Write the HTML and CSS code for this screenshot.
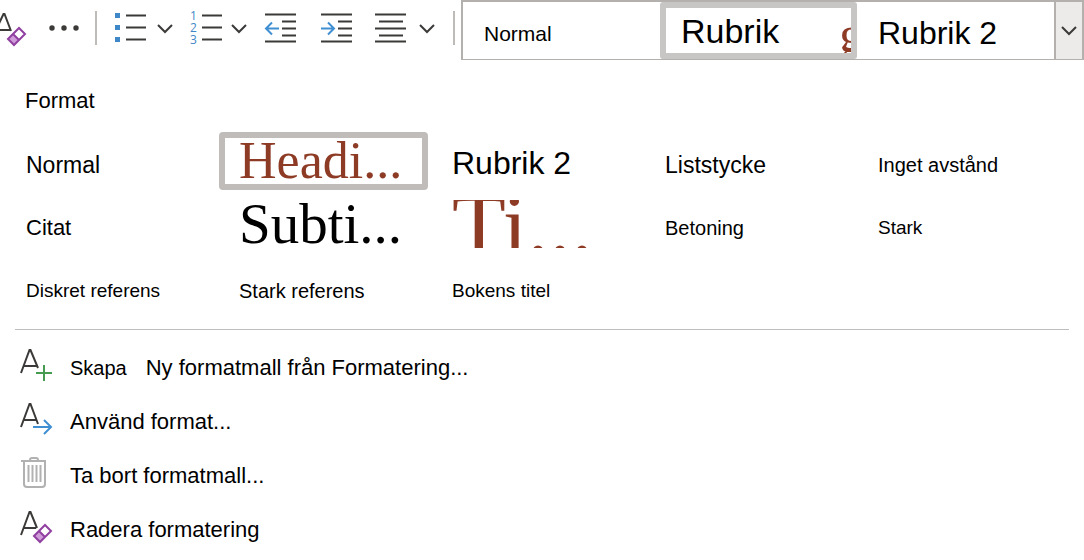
FILE: index.html
```html
<!DOCTYPE html>
<html lang="sv">
<head>
<meta charset="utf-8">
<meta name="viewport" content="width=device-width, initial-scale=1">
<title>Format</title>
<link rel="stylesheet" href="styles.css">
</head>
<body>
<header class="ribbon">
  <div class="tools">
    <button class="tool" aria-label="Radera formatering"><svg width="28" height="36" viewBox="0 0 28 36"><path class="ink" d="M-5 22 3.500 4h1L11 21M-2 20h12"/><path class="eraser-fill" d="m8 29 5-5 6 6-5 5z"/><path class="eraser" d="m8 29 11-11 6 6-11 11zM13 24l6 6"/></svg></button>
    <button class="tool tool-more" aria-label="Mer"><svg width="32" height="8" viewBox="0 0 32 8"><circle cx="4" cy="4" r="2.700"/><circle cx="16" cy="4" r="2.700"/><circle cx="28" cy="4" r="2.700"/></svg></button>
    <span class="rule"></span>
    <button class="tool tool-bullets" aria-label="Punktlista"><svg width="60" height="34" viewBox="0 0 60 34"><path class="blue-fill" d="M1 2h5v5H1zM1 14h5v5H1zM1 26h5v5H1z"/><path class="ink" d="M12 4.500h20M12 16.500h20M12 28.500h20M44 14l7 7 7-7"/></svg></button>
    <button class="tool tool-numbers" aria-label="Numrerad lista"><svg width="60" height="34" viewBox="0 0 60 34"><text class="digit" x="0" y="9">1</text><text class="digit" x="0" y="21">2</text><text class="digit" x="0" y="33">3</text><path class="ink" d="M12 4.500h20M12 16.500h20M12 28.500h20M42 14l7 7 7-7"/></svg></button>
    <button class="tool tool-outdent" aria-label="Minska indrag"><svg width="32" height="30" viewBox="0 0 32 30"><path class="ink" d="M0 1.500h31M17 8.500h14M17 15.500h14M17 22.500h14M0 28.500h31"/><path class="blue" d="M14 15.500H1M7 9.500l-6 6 6 6"/></svg></button>
    <button class="tool tool-indent" aria-label="Öka indrag"><svg width="32" height="30" viewBox="0 0 32 30"><path class="ink" d="M0 1.500h31M17 8.500h14M17 15.500h14M17 22.500h14M0 28.500h31"/><path class="blue" d="M0 15.500h13M7 9.500l6 6-6 6"/></svg></button>
    <button class="tool tool-align" aria-label="Justering"><svg width="62" height="30" viewBox="0 0 62 30"><path class="ink" d="M0 1.500h31M4 8.500h24M0 15.500h31M4 22.500h24M0 28.500h31M45 12l7 7 7-7"/></svg></button>
    <span class="rule"></span>
  </div>
  <div class="gallery">
    <button class="preview preview-normal">Normal</button>
    <button class="preview preview-selected"><span>Rubrik</span><span class="preview-tail">g</span></button>
    <button class="preview preview-second">Rubrik 2</button>
    <button class="gallery-toggle" aria-label="Fler format"><svg width="18" height="10" viewBox="0 0 18 10"><path class="ink" d="m2 1 7 7 7-7"/></svg></button>
  </div>
</header>
<main class="panel">
  <h1 class="title">Format</h1>
  <div class="styles">
    <button class="style size-l">Normal</button>
    <button class="style heading selected">Headi...</button>
    <button class="style size-xl">Rubrik 2</button>
    <button class="style size-l">Liststycke</button>
    <button class="style size-s">Inget avstånd</button>
    <button class="style size-m">Citat</button>
    <button class="style subtitle">Subti...</button>
    <button class="style book-title"><span class="book-title-text">Ti...</span></button>
    <button class="style size-s">Betoning</button>
    <button class="style size-xs">Stark</button>
    <button class="style size-xs">Diskret referens</button>
    <button class="style size-s">Stark referens</button>
    <button class="style size-xs">Bokens titel</button>
  </div>
  <hr class="divider">
  <div class="actions">
    <button class="action"><svg width="34" height="40" viewBox="0 0 34 40"><path class="ink" d="M1 25 9.500 2h1L18 20M4 18h13"/><path class="green" d="M24 17v16M16 25h16"/></svg><span class="action-lead">Skapa</span><span>Ny formatmall från Formatering...</span></button>
    <button class="action"><svg width="34" height="40" viewBox="0 0 34 40"><path class="ink" d="M1 25 9.500 2h1L18 22M4 18h13"/><path class="blue" d="M13 25h18M24 18l7 7-7 7"/></svg><span>Använd format...</span></button>
    <button class="action"><svg width="34" height="40" viewBox="0 0 34 40"><path class="grey" d="M1 5h25M4 5v23q0 3 3 3h15q3 0 3-3V5M10 5V4q0-2 2-2h4q2 0 2 2v1M8.500 9v17M12.500 9v17M16.500 9v17M20.500 9v17"/></svg><span>Ta bort formatmall...</span></button>
    <button class="action"><svg width="34" height="40" viewBox="0 0 34 40"><path class="ink" d="M1 25 9.500 2h1L17 18M4 18h12"/><path class="eraser-fill" d="m14 26 5-5 6 6-5 5z"/><path class="eraser" d="m14 26 11-11 6 6-11 11zM19 21l6 6"/></svg><span>Radera formatering</span></button>
  </div>
</main>
</body>
</html>
```
FILE: styles.css
```css
* { box-sizing: border-box; }
body { margin: 0; background: #fff; color: #000; font-family: "Liberation Sans", Arial, sans-serif; }
button { margin: 0; padding: 0; border: 0; background: none; color: inherit; font: inherit; text-align: left; white-space: nowrap; cursor: pointer; }
svg { display: block; flex: none; fill: none; overflow: visible; }

.ink { stroke: #3b3a39; stroke-width: 2; }
.blue { stroke: #3f8fd2; stroke-width: 2; }
.blue-fill { fill: #3f88c8; }
.green { stroke: #479b50; stroke-width: 2; }
.grey { stroke: #b1b1b1; stroke-width: 2; }
.eraser { stroke: #9040a0; stroke-width: 2; }
.eraser-fill { fill: #cf9bd8; }
.digit { fill: #3f88c8; font: 12px "Open Sans", sans-serif; }

.ribbon { display: flex; height: 60px; }
.tools { display: flex; flex: none; align-items: center; width: 461px; height: 56px; }
.tool { flex: none; }
.tool-more { margin-left: 20px; }
.tool-more svg { fill: #3b3a39; }
.rule { flex: none; width: 2px; height: 34px; margin-left: 15px; background: #bebbb8; }
.tool-bullets { margin-left: 17px; }
.tool-numbers { margin-left: 16px; }
.tool-outdent { margin-left: 15px; }
.tool-indent { margin-left: 24px; }
.tool-align { margin-left: 22px; }
.tool-align + .rule { margin-left: 16px; }

.gallery { display: grid; flex: 1; grid-template-columns: repeat(3, minmax(0, 1fr)) 28px; min-width: 0; border: 2px solid #b3b0ad; border-bottom-width: 1px; }
.preview { min-width: 0; overflow: hidden; }
.preview-normal { padding: 6px 0 0 21px; font-size: 21px; }
.preview-selected { display: flex; align-items: center; justify-content: space-between; padding: 0 0 0 15px; border: 6px solid #c8c6c4; border-radius: 3px; font-size: 34px; line-height: 40px; }
.preview-tail { width: 12px; height: 44px; color: #8e3b26; font-family: "Liberation Serif", serif; font-size: 52px; line-height: 52px; }
.preview-second { padding: 6px 0 0 21px; font-size: 32px; }
.gallery-toggle { display: flex; align-items: center; justify-content: center; border-left: 2px solid #b3b0ad; background: #edebe9; }

.panel { padding: 28px 15px 4px; }
.title { margin: 0 0 18px 10px; font-size: 22px; font-weight: 400; line-height: 26px; }
.styles { display: grid; grid-template-columns: repeat(5, minmax(0, 1fr)); grid-template-rows: 58px 68px 58px; margin: 0 -2px 0 -9px; }
.style { min-width: 0; overflow: hidden; padding: 8px 0 0 20px; }
.size-xs { font-size: 19px; }
.size-s { font-size: 20px; }
.size-m { font-size: 22px; }
.size-l { font-size: 23px; }
.size-xl { padding-top: 4px; font-size: 32px; }
.heading, .subtitle, .book-title { padding-top: 0; font-family: "Liberation Serif", serif; }
.heading { color: #8e3b26; font-size: 52px; line-height: 46px; }
.selected { margin-right: 4px; padding-left: 14px; border: 6px solid #c0bcb9; border-radius: 4px; }
.subtitle { font-size: 57px; line-height: 68px; }
.book-title { color: #8e3b26; font-size: 88px; }
.book-title-text { display: block; height: 48px; overflow: hidden; line-height: 52px; }
.divider { height: 1px; margin: 13px 0 11px; border: 0; background: #c0bebc; }
.actions { display: flex; flex-direction: column; }
.action { display: flex; align-items: center; height: 54px; padding-left: 5px; font-size: 22px; }
.action svg { margin-right: 16px; }
.action-lead { margin-right: 19px; font-size: 20px; }
```
